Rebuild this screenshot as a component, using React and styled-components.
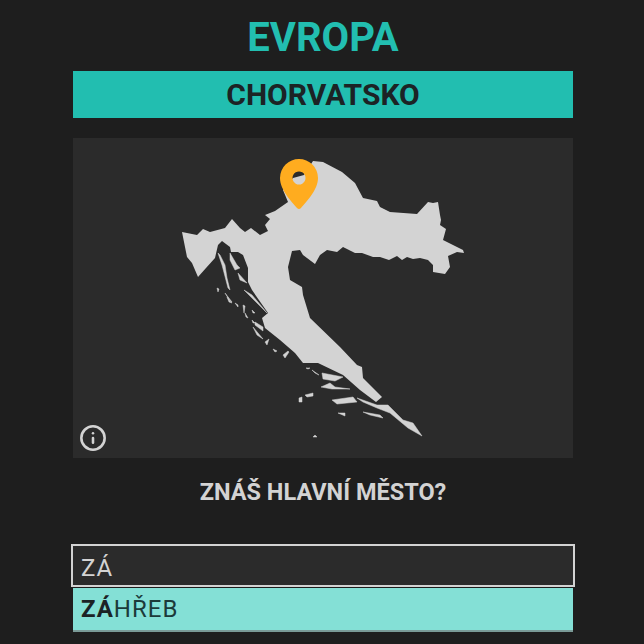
import React from "react";
import styled, { createGlobalStyle } from "styled-components";
import { Info } from "lucide-react";

const GlobalStyle = createGlobalStyle`
  html, body {
    margin: 0;
    padding: 0;
    height: 100%;
    background: #1e1e1e;
    overflow: hidden;
  }
`;

const Page = styled.main`
  width: 500px;
  margin-left: 73px;
  display: flex;
  flex-direction: column;
  font-family: Roboto, "Liberation Sans", sans-serif;
`;

const Continent = styled.h1`
  margin: 0;
  height: 71px;
  line-height: 76px;
  text-align: center;
  font-size: 40px;
  font-weight: 700;
  color: #22beb0;
`;

const Country = styled.h2`
  margin: 0;
  height: 47px;
  line-height: 48px;
  text-align: center;
  font-size: 30px;
  font-weight: 700;
  color: #1c2325;
  background: #22beb0;
`;

const MapPanel = styled.div`
  position: relative;
  height: 320px;
  margin-top: 20px;
  background: #2b2b2b;
`;

const MapSvg = styled.svg`
  display: block;
  width: 100%;
  height: 100%;
`;

const InfoButton = styled.button`
  position: absolute;
  left: 6px;
  bottom: 6px;
  display: flex;
  padding: 0;
  border: 0;
  background: none;
  color: #d3d3d3;
`;

const Question = styled.p`
  margin: 0;
  height: 86px;
  line-height: 69px;
  text-align: center;
  font-size: 23.5px;
  font-weight: 700;
  color: #d3d3d3;
`;

const Guess = styled.input`
  box-sizing: border-box;
  width: 504px;
  height: 43px;
  margin: 0 -2px;
  padding: 5px 8px 0;
  border: 2px solid #d3d3d3;
  border-radius: 0;
  outline: none;
  background: #2b2b2b;
  color: #d3d3d3;
  font-family: inherit;
  font-size: 24px;
  font-weight: 400;
  letter-spacing: 1px;
`;

const Suggestion = styled.div`
  box-sizing: border-box;
  height: 44px;
  margin-top: 1px;
  padding: 0 8px;
  line-height: 42px;
  font-size: 24px;
  font-weight: 400;
  letter-spacing: 1px;
  color: #1c3a3a;
  background: #84e0d6;
  border-bottom: 2px solid #7a9a97;

  b {
    font-weight: 700;
    color: #1c2325;
  }
`;

const mainland =
  "M182 232 L197 235 L203 229 L210 232 L225 228 L232 219 L240 228 L245 232 L251 228 L260 235 L268 231 L265 225 L270 219 L265 215 L275 211 L288 202 L283 190 L293 178 L304 175 L313 161 L323 162 L342 172 L355 183 L363 198 L377 201 L380 207 L390 212 L417 214 L428 202 L433 203 L438 202 L440 215 L441 220 L440 225 L446 229 L443 240 L463 250 L464 253 L457 252 L448 256 L450 267 L445 274 L433 272 L433 265 L428 260 L420 258 L413 259 L407 257 L402 260 L397 256 L389 260 L380 257 L373 257 L362 253 L355 253 L343 247 L337 252 L327 250 L320 255 L315 264 L303 255 L300 250 L292 251 L288 267 L290 280 L302 287 L303 295 L310 318 L340 347 L357 365 L362 367 L363 378 L382 397 L376 402 L360 390 L343 375 L318 363 L303 363 L295 353 L280 340 L265 328 L262 318 L268 313 L252 290 L248 282 L248 268 L243 255 L238 252 L231 252 L230 247 L222 241 L218 245 L215 258 L206 268 L198 277 L192 263 L187 257 Z";

const islands = [
  "218,253 222,265 228,288 230,290 227,278 225,265 220,255",
  "230,253 237,265 240,268 235,270 230,260",
  "238,273 247,283 240,280",
  "225,293 232,302 228,298",
  "217,288 219,289 218,292",
  "235,303 238,305 238,307",
  "243,305 245,306 244,313",
  "244,290 252,295 263,308 267,313 257,303",
  "227,297 232,303 229,302",
  "245,313 248,318 246,317",
  "252,310 255,313 253,313",
  "252,320 255,323 253,323",
  "255,322 263,327 263,331 255,325",
  "253,327 263,339 257,335",
  "265,342 269,339 267,345",
  "273,349 277,351 275,352",
  "283,355 288,351 289,352 285,358",
  "306,368 310,368 308,369",
  "312,370 319,375 315,373",
  "322,373 343,377 335,381 323,379",
  "321,387 330,383 335,387 350,389 332,389",
  "305,395 313,393 313,396 307,397",
  "299,398 302,397 302,402 299,402",
  "332,400 353,397 357,402 337,404",
  "357,398 377,405 388,405 403,420 413,423 422,436 408,428 390,413 377,408 363,402",
  "338,413 345,413 345,416",
  "363,412 380,415 383,418 370,415",
  "313,437 317,437 315,435",
];

const pin =
  "M299 159 a19 19 0 0 1 19 19 c0 12 -12 24 -17 30 q-2 2 -4 0 c-5 -6 -17 -18 -17 -30 a19 19 0 0 1 19 -19 z M299 171.5 a6.5 6.5 0 1 0 0.01 0 z";

export default function App() {
  return (
    <>
      <GlobalStyle />
      <Page>
        <Continent>EVROPA</Continent>
        <Country>CHORVATSKO</Country>
        <MapPanel>
          <MapSvg viewBox="73 138 500 320">
            <path d={mainland} fill="#d3d3d3" />
            {islands.map((points) => (
              <polygon key={points} points={points} fill="#d3d3d3" stroke="#d3d3d3" strokeWidth="0.5" />
            ))}
            <path d={pin} fill="#ffac1f" fillRule="evenodd" />
          </MapSvg>
          <InfoButton aria-label="info">
            <Info size={28} strokeWidth={2.2} />
          </InfoButton>
        </MapPanel>
        <Question>ZNÁŠ HLAVNÍ MĚSTO?</Question>
        <Guess defaultValue="ZÁ" />
        <Suggestion>
          <b>ZÁ</b>HŘEB
        </Suggestion>
      </Page>
    </>
  );
}
